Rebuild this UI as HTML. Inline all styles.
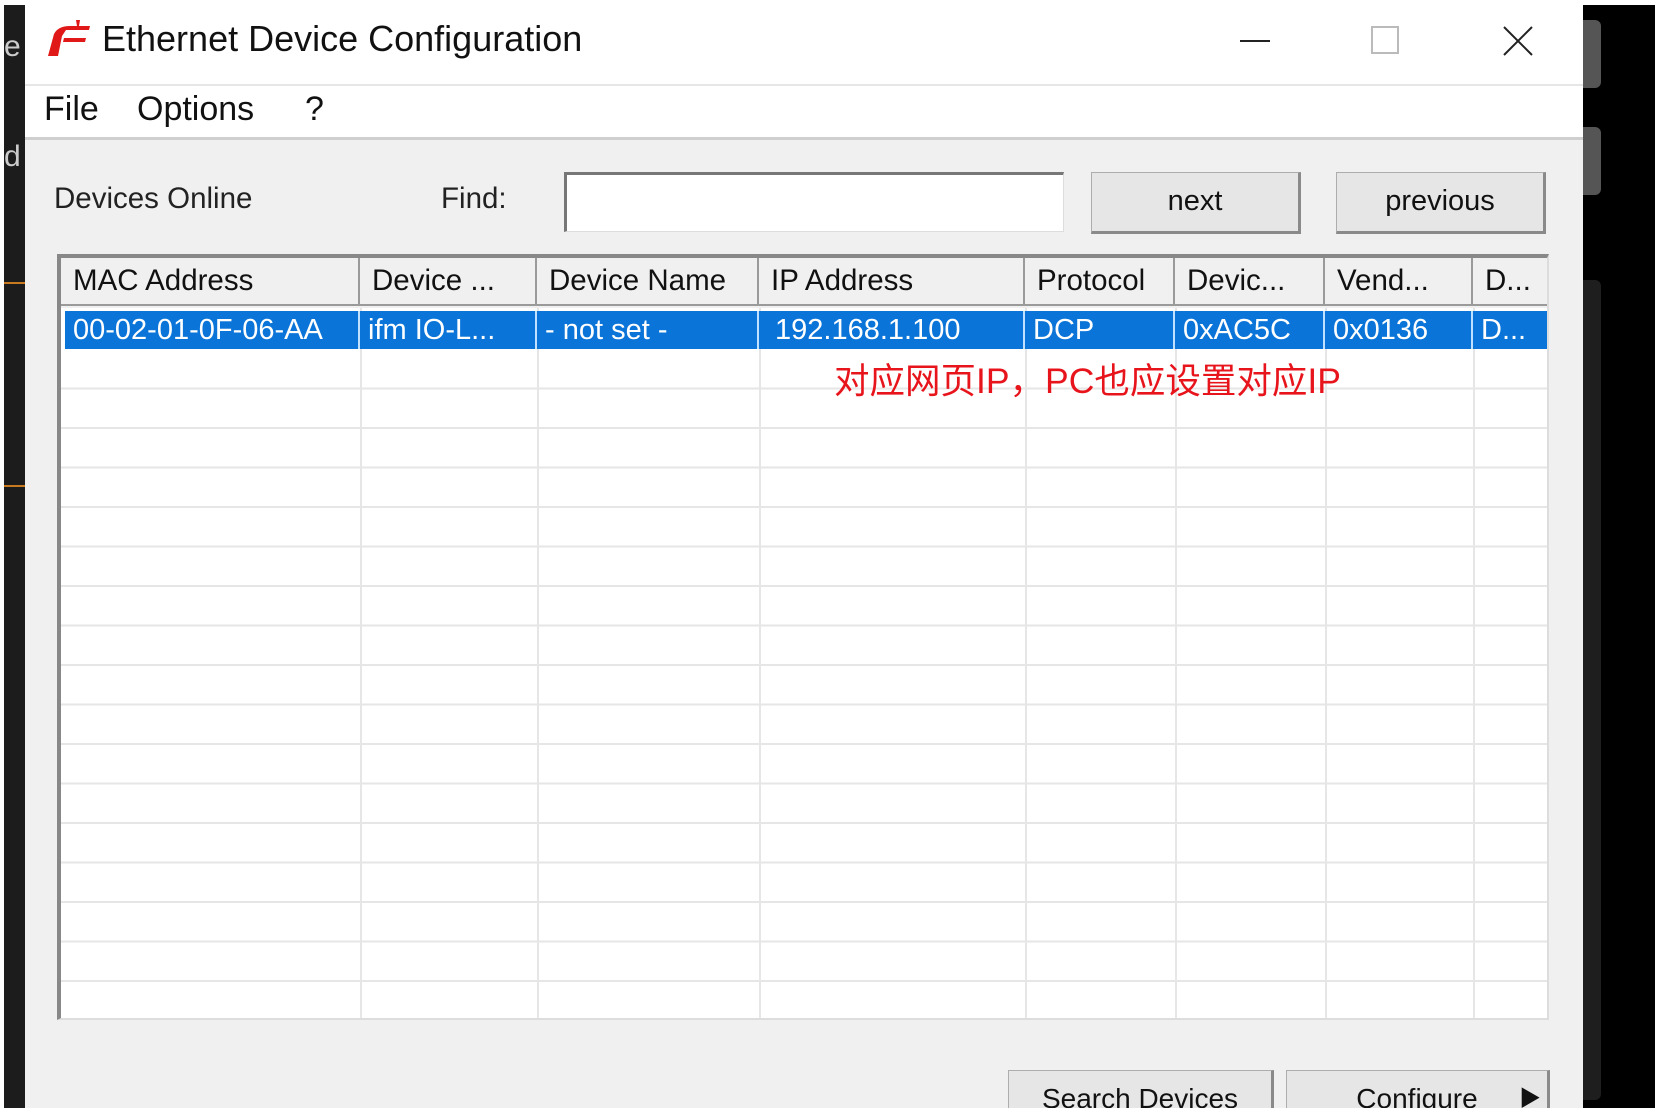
<!DOCTYPE html>
<html><head><meta charset="utf-8"><style>
*{margin:0;padding:0;box-sizing:border-box}
html,body{width:1655px;height:1114px;overflow:hidden}
body{position:relative;background:#fff;font-family:"Liberation Sans","Noto Sans CJK SC",sans-serif;color:#111}
.a{position:absolute}
.btn{position:absolute;background:#e6e6e6;border:1px solid #adadad;border-right:3px solid #8a8a8a;border-bottom:3px solid #8a8a8a;font-size:29px;text-align:center}
.hd{position:absolute;top:0;height:48px;line-height:46px;font-size:29.5px;padding-left:12px;border-right:2px solid #9a9a9a;border-bottom:2px solid #9a9a9a;background:#f0f0f0;white-space:nowrap;overflow:hidden}
.cl{position:absolute;top:0;height:38px;line-height:38px;font-size:29px;color:#fff;padding-left:8px;white-space:nowrap;border-right:2px solid #bfe0ff}
</style></head><body>
<div class="a" style="left:4px;top:5px;width:21px;height:1103px;background:#1c1c1c"></div>
<div class="a" style="left:4px;top:30px;color:#ccc;font-size:30px">e</div>
<div class="a" style="left:4px;top:140px;color:#ccc;font-size:30px">d</div>
<div class="a" style="left:4px;top:282px;width:21px;height:2px;background:#c87a20"></div>
<div class="a" style="left:4px;top:485px;width:21px;height:2px;background:#c87a20"></div>
<div class="a" style="left:1583px;top:5px;width:72px;height:1103px;background:#000"></div>
<div class="a" style="left:1583px;top:20px;width:18px;height:68px;background:#555;border-radius:0 6px 6px 0"></div>
<div class="a" style="left:1583px;top:127px;width:18px;height:68px;background:#555;border-radius:0 6px 6px 0"></div>
<div class="a" style="left:1583px;top:280px;width:18px;height:820px;background:#1e1e1e;border-radius:0 6px 6px 0"></div>

<div class="a" style="left:25px;top:0;width:1558px;height:1108px;background:#f0f0f0;overflow:hidden">
<div class="a" style="left:0;top:0;width:1558px;height:140px;background:#fff;border-bottom:3px solid #cfcfcf"></div>
<div class="a" style="left:0;top:84px;width:1558px;height:2px;background:#e6e6e6"></div>
<svg class="a" style="left:21px;top:18px" width="46" height="40" viewBox="0 0 46 40"><path d="M30 2 L34 2 L33 8 L44 8 L43 12 L20 12 L16 18 L12 38 L2 38 L8 16 Q12 8 24 8 L31 8 Z" fill="#e01818"/><path d="M18 20 L40 20 L39 24 L17 24Z" fill="#e01818"/></svg>
<div class="a" style="left:77px;top:18px;font-size:36px;color:#111">Ethernet Device Configuration</div>
<div class="a" style="left:1215px;top:40px;width:30px;height:2px;background:#222"></div>
<div class="a" style="left:1346px;top:26px;width:28px;height:28px;border:2px solid #bbb"></div>
<svg class="a" style="left:1477px;top:25px" width="32" height="32"><path d="M2 2L30 30M30 2L2 30" stroke="#222" stroke-width="2"/></svg>
<div class="a" style="left:19px;top:90px;font-size:34px">File</div>
<div class="a" style="left:112px;top:90px;font-size:34px">Options</div>
<div class="a" style="left:280px;top:90px;font-size:34px">?</div>

<div class="a" style="left:29px;top:182px;font-size:29.5px;color:#222">Devices Online</div>
<div class="a" style="left:416px;top:182px;font-size:29.5px;color:#222">Find:</div>
<div class="a" style="left:539px;top:172px;width:500px;height:60px;background:#fff;border-top:3px solid #777;border-left:3px solid #777;border-right:1px solid #ddd;border-bottom:1px solid #ddd"></div>
<div class="btn" style="left:1066px;top:172px;width:210px;height:62px;line-height:56px">next</div>
<div class="btn" style="left:1311px;top:172px;width:210px;height:62px;line-height:56px">previous</div>

<div class="a" style="left:32px;top:254px;width:1492px;height:766px;background:#fff;border-top:4px solid #888;border-left:4px solid #888;border-right:2px solid #ddd;border-bottom:2px solid #ddd;overflow:hidden">
 <div class="a" style="left:0;top:0;width:1500px;height:50px;background:#f0f0f0"></div>
 <div class="hd" style="left:0;width:299px">MAC Address</div>
 <div class="hd" style="left:299px;width:177px">Device ...</div>
 <div class="hd" style="left:476px;width:222px">Device Name</div>
 <div class="hd" style="left:698px;width:266px">IP Address</div>
 <div class="hd" style="left:964px;width:150px">Protocol</div>
 <div class="hd" style="left:1114px;width:150px">Devic...</div>
 <div class="hd" style="left:1264px;width:148px">Vend...</div>
 <div class="hd" style="left:1412px;width:76px">D...</div>
 <div class="a" style="left:0;top:92px;width:1500px;height:680px;background:repeating-linear-gradient(to bottom,#fff 0,#fff 37.5px,#e6e6e6 37.5px,#e6e6e6 39.5px)"></div>
 <div class="a" style="left:299px;top:50px;width:2px;height:720px;background:#e6e6e6"></div>
 <div class="a" style="left:476px;top:50px;width:2px;height:720px;background:#e6e6e6"></div>
 <div class="a" style="left:698px;top:50px;width:2px;height:720px;background:#e6e6e6"></div>
 <div class="a" style="left:964px;top:50px;width:2px;height:720px;background:#e6e6e6"></div>
 <div class="a" style="left:1114px;top:50px;width:2px;height:720px;background:#e6e6e6"></div>
 <div class="a" style="left:1264px;top:50px;width:2px;height:720px;background:#e6e6e6"></div>
 <div class="a" style="left:1412px;top:50px;width:2px;height:720px;background:#e6e6e6"></div>
 <div class="a" style="left:4px;top:53px;width:1484px;height:38px;background:#0a74d8">
  <div class="cl" style="left:0;width:295px">00-02-01-0F-06-AA</div>
  <div class="cl" style="left:295px;width:177px">ifm IO-L...</div>
  <div class="cl" style="left:472px;width:222px">- not set -</div>
  <div class="cl" style="left:694px;width:266px;padding-left:16px">192.168.1.100</div>
  <div class="cl" style="left:960px;width:150px">DCP</div>
  <div class="cl" style="left:1110px;width:150px">0xAC5C</div>
  <div class="cl" style="left:1260px;width:148px">0x0136</div>
  <div class="cl" style="left:1408px;width:80px;border:none">D...</div>
 </div>
</div>
<div class="a" style="left:809px;top:353px;font-size:35.5px;color:#e8141c;white-space:nowrap">对应网页IP，PC也应设置对应IP</div>

<div class="btn" style="left:983px;top:1070px;width:266px;height:60px;line-height:56px;font-size:28px">Search Devices</div>
<div class="btn" style="left:1261px;top:1070px;width:264px;height:60px;line-height:56px;font-size:28px">Configure<span style="position:absolute;right:6px;top:0;font-size:22px">▶</span></div>
</div>
</body></html>
